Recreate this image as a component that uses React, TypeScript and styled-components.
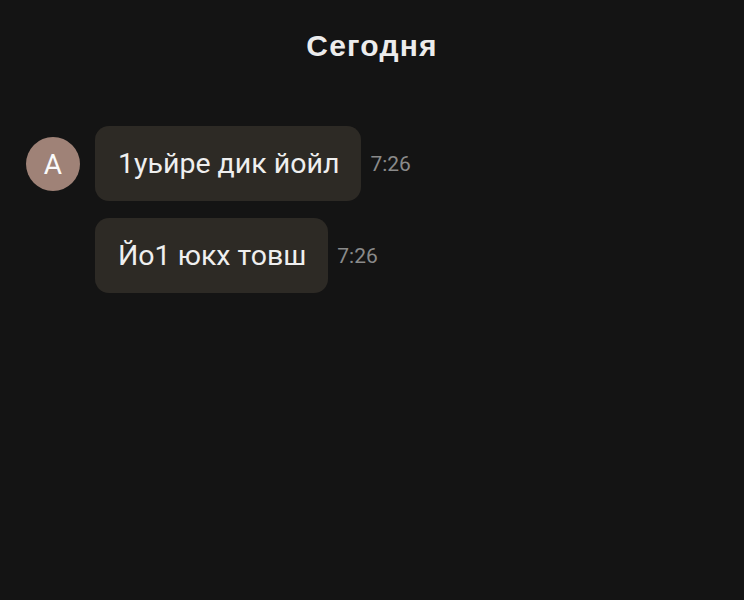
import styled, { createGlobalStyle } from "styled-components";

const GlobalStyle = createGlobalStyle`
  html, body {
    margin: 0;
    background: #141414;
  }
  body {
    font-family: Roboto, "Noto Sans", sans-serif;
  }
`

type Msg = { text: string; time: string }

const messages: Msg[] = [
  { text: "1уьйре дик йойл", time: "7:26" },
  { text: "Йо1 юкх товш", time: "7:26" },
]

function App() {
  return (
    <Page>
      <GlobalStyle />
      <DateLabel>Сегодня</DateLabel>
      <Group>
        <Avatar>A</Avatar>
        <Stack>
          {messages.map((m, i) => (
            <Row key={i}>
              <Bubble>{m.text}</Bubble>
              <Time>{m.time}</Time>
            </Row>
          ))}
        </Stack>
      </Group>
    </Page>
  );
}

export default App;

const Page = styled.main`
  width: 744px;
  height: 600px;
  background: #141414;
  display: flex;
  flex-direction: column;
  box-sizing: border-box;
  padding-top: 27px;
`
const DateLabel = styled.div`
  align-self: center;
  color: #ececec;
  font-family: "Liberation Sans", Arial, sans-serif;
  font-weight: 700;
  font-size: 30px;
  letter-spacing: 1.2px;
  line-height: 38px;
`
const Group = styled.div`
  display: flex;
  align-items: flex-start;
  gap: 15px;
  margin-top: 61px;
  padding-left: 26px;
`
const Avatar = styled.div`
  width: 54px;
  height: 54px;
  border-radius: 50%;
  background: #9f8277;
  color: #fafafa;
  font-size: 28px;
  display: flex;
  align-items: center;
  justify-content: center;
  margin-top: 11px;
  flex-shrink: 0;
`
const Stack = styled.div`
  display: flex;
  flex-direction: column;
  gap: 17px;
`
const Row = styled.div`
  display: flex;
  align-items: center;
  gap: 9px;
`
const Bubble = styled.div`
  background: #2d2a25;
  color: #efefef;
  border-radius: 14px;
  height: 75px;
  box-sizing: border-box;
  padding: 0 22px 0 23px;
  display: flex;
  align-items: center;
  font-size: 28.5px;
`
const Time = styled.span`
  color: #8a8a8a;
  font-size: 21px;
`
